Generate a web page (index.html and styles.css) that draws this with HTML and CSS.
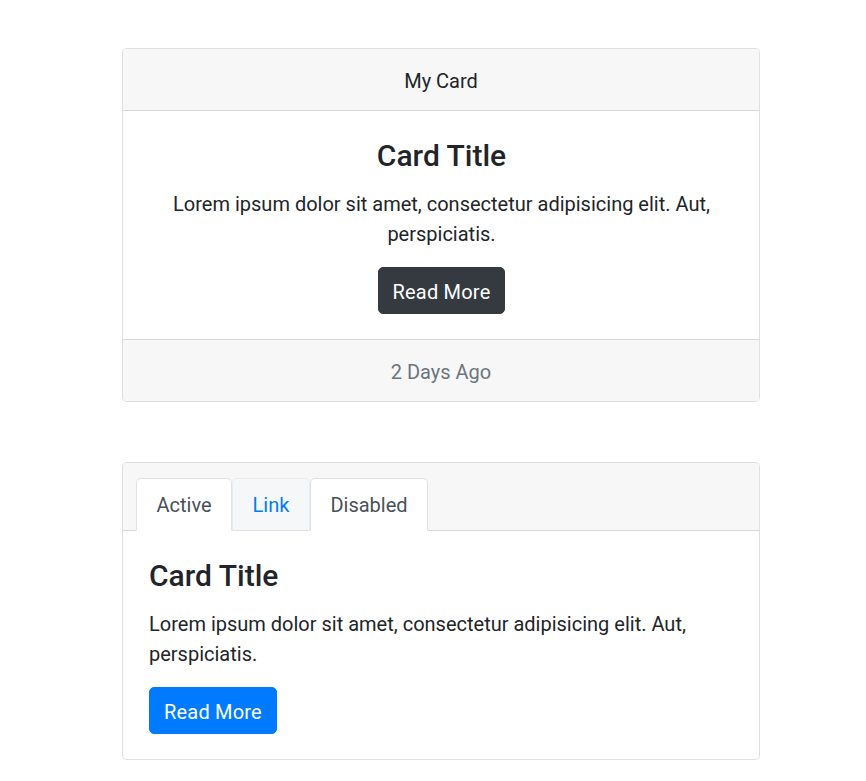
FILE: index.html
```html
<!DOCTYPE html>
<html lang="en">
<head>
<meta charset="utf-8">
<title>Cards</title>
<link rel="stylesheet" href="styles.css">
</head>
<body>
<div class="container">
  <div class="card text-center">
    <div class="card-header">My Card</div>
    <div class="card-body">
      <h4 class="card-title">Card Title</h4>
      <p class="card-text">Lorem ipsum dolor sit amet, consectetur adipisicing elit. Aut, perspiciatis.</p>
      <a href="#" class="btn btn-dark">Read More</a>
    </div>
    <div class="card-footer">2 Days Ago</div>
  </div>

  <div class="card card-gap">
    <div class="card-header header-tabs">
      <ul class="nav-tabs">
        <li><a href="#" class="nav-link active">Active</a></li>
        <li><a href="#" class="nav-link link">Link</a></li>
        <li><a href="#" class="nav-link active">Disabled</a></li>
      </ul>
    </div>
    <div class="card-body">
      <h4 class="card-title">Card Title</h4>
      <p class="card-text">Lorem ipsum dolor sit amet, consectetur adipisicing elit. Aut, perspiciatis.</p>
      <a href="#" class="btn btn-primary">Read More</a>
    </div>
  </div>
</div>
</body>
</html>
```
FILE: styles.css
```css
*{box-sizing:border-box}
body{margin:0;background:#fff;color:#212529;font-family:Roboto,"Liberation Sans",sans-serif;font-size:20px;line-height:30px}
.container{width:638px;margin-left:122px;padding-top:48px;padding-bottom:21px}
.card{border:1px solid rgba(0,0,0,.125);border-radius:5px;background:#fff;overflow:hidden}
.card-gap{margin-top:60px}
.text-center{text-align:center}
.card-header{background:#f7f7f7;padding:17px 25px 14px;border-bottom:1px solid rgba(0,0,0,.125)}
.card-footer{background:#f7f7f7;padding:17px 25px 14px;border-top:1px solid rgba(0,0,0,.125);color:#6c757d}
.card-body{padding:25px 25px 25px 26px}
.card-title{margin:0 0 13px;padding-top:2px;font-size:30px;line-height:36px;font-weight:500}
.card-text{margin:0 0 18px;padding-top:2px}
.btn{display:inline-block;padding:8.5px 14px 6.5px;border:1px solid transparent;border-radius:5px;color:#fff;text-decoration:none;font-size:20px;line-height:30px;letter-spacing:.2px}
.btn-dark{background:#343a40;border-color:#343a40}
.btn-primary{background:#007bff;border-color:#007bff}
.header-tabs{padding:15px 25px 0;overflow:visible}
.nav-tabs{list-style:none;margin:0 0 -1px -12px;padding:0;display:flex}
.nav-link{display:block;padding:11px 19.5px 10px;height:53px;border:1px solid transparent;border-top-left-radius:5px;border-top-right-radius:5px;text-decoration:none}
.nav-link.active{background:#fff;color:#495057;border-color:#dee2e6 #dee2e6 #fff}
.nav-link.link{color:#007bff;background:#f6f7f8;border-color:#e9ecef #e9ecef #dee2e6}
```
